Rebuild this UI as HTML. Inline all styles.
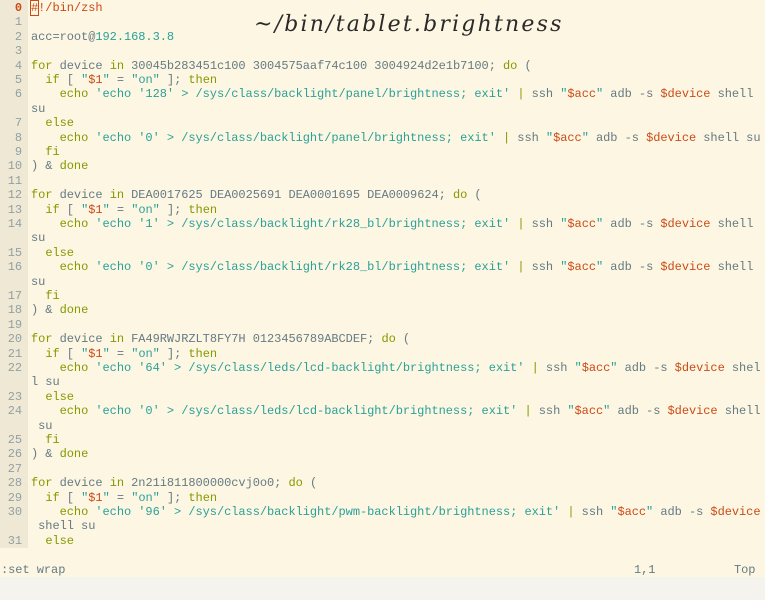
<!DOCTYPE html>
<html><head><meta charset="utf-8"><style>
html,body{margin:0;padding:0;}
body{width:765px;height:600px;background:#f5f3ee;position:relative;overflow:hidden;font-family:"Liberation Mono","DejaVu Sans Mono",monospace;font-size:12px;letter-spacing:-0.05px;}
#scr{position:absolute;left:0;top:0;width:765px;height:577px;background:#fdf6e3;}
#gut{position:absolute;left:0;top:0;width:28px;height:548px;background:#eee8d5;}
.r{position:absolute;left:0;height:14.4px;line-height:14.4px;white-space:pre;color:#657b83;}
.n{position:absolute;left:0;width:22px;text-align:right;color:#93a1a1;}
.t{position:absolute;left:31px;}
.k{color:#859900}.s{color:#2aa198}.v{color:#cb4b16}
.cur{outline:1px solid #cb4b16;color:#cb4b16}
#title{position:absolute;left:254px;top:12px;font-family:"DejaVu Serif",serif;font-style:italic;font-weight:300;font-size:22px;color:#2a2a2a;letter-spacing:2.2px;}
</style></head><body>
<div id="scr"><div id="gut"></div>
<div class="r" style="top:1px"><span class="n" style="color:#cb4b16;font-weight:bold">0</span><span class="t"><span class="cur">#</span><span class="v">!/bin/zsh</span></span></div>
<div class="r" style="top:15.4px"><span class="n">1</span></div>
<div class="r" style="top:29.8px"><span class="n">2</span><span class="t">acc=root@<span class="s">192.168.3.8</span></span></div>
<div class="r" style="top:44.2px"><span class="n">3</span></div>
<div class="r" style="top:58.6px"><span class="n">4</span><span class="t"><span class="k">for</span> device <span class="k">in</span> 30045b283451c100 3004575aaf74c100 3004924d2e1b7100; <span class="k">do</span> (</span></div>
<div class="r" style="top:73px"><span class="n">5</span><span class="t">  <span class="k">if</span> [ <span class="s">"</span><span class="v">$1</span><span class="s">"</span> = <span class="s">"on"</span> ]; <span class="k">then</span></span></div>
<div class="r" style="top:87.4px"><span class="n">6</span><span class="t">    <span class="k">echo</span> <span class="s">'echo '128' &gt; /sys/class/backlight/panel/brightness; exit'</span> <span class="k">|</span> ssh <span class="s">"</span><span class="v">$acc</span><span class="s">"</span> adb -s <span class="v">$device</span> shell</span></div>
<div class="r" style="top:101.8px"><span class="t">su</span></div>
<div class="r" style="top:116.2px"><span class="n">7</span><span class="t">  <span class="k">else</span></span></div>
<div class="r" style="top:130.6px"><span class="n">8</span><span class="t">    <span class="k">echo</span> <span class="s">'echo '0' &gt; /sys/class/backlight/panel/brightness; exit'</span> <span class="k">|</span> ssh <span class="s">"</span><span class="v">$acc</span><span class="s">"</span> adb -s <span class="v">$device</span> shell su</span></div>
<div class="r" style="top:145px"><span class="n">9</span><span class="t">  <span class="k">fi</span></span></div>
<div class="r" style="top:159.4px"><span class="n">10</span><span class="t">) &amp; <span class="k">done</span></span></div>
<div class="r" style="top:173.8px"><span class="n">11</span></div>
<div class="r" style="top:188.2px"><span class="n">12</span><span class="t"><span class="k">for</span> device <span class="k">in</span> DEA0017625 DEA0025691 DEA0001695 DEA0009624; <span class="k">do</span> (</span></div>
<div class="r" style="top:202.6px"><span class="n">13</span><span class="t">  <span class="k">if</span> [ <span class="s">"</span><span class="v">$1</span><span class="s">"</span> = <span class="s">"on"</span> ]; <span class="k">then</span></span></div>
<div class="r" style="top:217px"><span class="n">14</span><span class="t">    <span class="k">echo</span> <span class="s">'echo '1' &gt; /sys/class/backlight/rk28_bl/brightness; exit'</span> <span class="k">|</span> ssh <span class="s">"</span><span class="v">$acc</span><span class="s">"</span> adb -s <span class="v">$device</span> shell</span></div>
<div class="r" style="top:231.4px"><span class="t">su</span></div>
<div class="r" style="top:245.8px"><span class="n">15</span><span class="t">  <span class="k">else</span></span></div>
<div class="r" style="top:260.2px"><span class="n">16</span><span class="t">    <span class="k">echo</span> <span class="s">'echo '0' &gt; /sys/class/backlight/rk28_bl/brightness; exit'</span> <span class="k">|</span> ssh <span class="s">"</span><span class="v">$acc</span><span class="s">"</span> adb -s <span class="v">$device</span> shell</span></div>
<div class="r" style="top:274.6px"><span class="t">su</span></div>
<div class="r" style="top:289px"><span class="n">17</span><span class="t">  <span class="k">fi</span></span></div>
<div class="r" style="top:303.4px"><span class="n">18</span><span class="t">) &amp; <span class="k">done</span></span></div>
<div class="r" style="top:317.8px"><span class="n">19</span></div>
<div class="r" style="top:332.2px"><span class="n">20</span><span class="t"><span class="k">for</span> device <span class="k">in</span> FA49RWJRZLT8FY7H 0123456789ABCDEF; <span class="k">do</span> (</span></div>
<div class="r" style="top:346.6px"><span class="n">21</span><span class="t">  <span class="k">if</span> [ <span class="s">"</span><span class="v">$1</span><span class="s">"</span> = <span class="s">"on"</span> ]; <span class="k">then</span></span></div>
<div class="r" style="top:361px"><span class="n">22</span><span class="t">    <span class="k">echo</span> <span class="s">'echo '64' &gt; /sys/class/leds/lcd-backlight/brightness; exit'</span> <span class="k">|</span> ssh <span class="s">"</span><span class="v">$acc</span><span class="s">"</span> adb -s <span class="v">$device</span> shel</span></div>
<div class="r" style="top:375.4px"><span class="t">l su</span></div>
<div class="r" style="top:389.8px"><span class="n">23</span><span class="t">  <span class="k">else</span></span></div>
<div class="r" style="top:404.2px"><span class="n">24</span><span class="t">    <span class="k">echo</span> <span class="s">'echo '0' &gt; /sys/class/leds/lcd-backlight/brightness; exit'</span> <span class="k">|</span> ssh <span class="s">"</span><span class="v">$acc</span><span class="s">"</span> adb -s <span class="v">$device</span> shell</span></div>
<div class="r" style="top:418.6px"><span class="t"> su</span></div>
<div class="r" style="top:433px"><span class="n">25</span><span class="t">  <span class="k">fi</span></span></div>
<div class="r" style="top:447.4px"><span class="n">26</span><span class="t">) &amp; <span class="k">done</span></span></div>
<div class="r" style="top:461.8px"><span class="n">27</span></div>
<div class="r" style="top:476.2px"><span class="n">28</span><span class="t"><span class="k">for</span> device <span class="k">in</span> 2n21i811800000cvj0o0; <span class="k">do</span> (</span></div>
<div class="r" style="top:490.6px"><span class="n">29</span><span class="t">  <span class="k">if</span> [ <span class="s">"</span><span class="v">$1</span><span class="s">"</span> = <span class="s">"on"</span> ]; <span class="k">then</span></span></div>
<div class="r" style="top:505px"><span class="n">30</span><span class="t">    <span class="k">echo</span> <span class="s">'echo '96' &gt; /sys/class/backlight/pwm-backlight/brightness; exit'</span> <span class="k">|</span> ssh <span class="s">"</span><span class="v">$acc</span><span class="s">"</span> adb -s <span class="v">$device</span></span></div>
<div class="r" style="top:519.4px"><span class="t"> shell su</span></div>
<div class="r" style="top:533.8px"><span class="n">31</span><span class="t">  <span class="k">else</span></span></div>
<div class="r" style="top:563px;left:1px;width:765px"><span>:set wrap</span><span style="position:absolute;left:633px">1,1</span><span style="position:absolute;left:733px">Top</span></div>
<div id="title">~/bin/tablet.brightness</div>
</div>
</body></html>
